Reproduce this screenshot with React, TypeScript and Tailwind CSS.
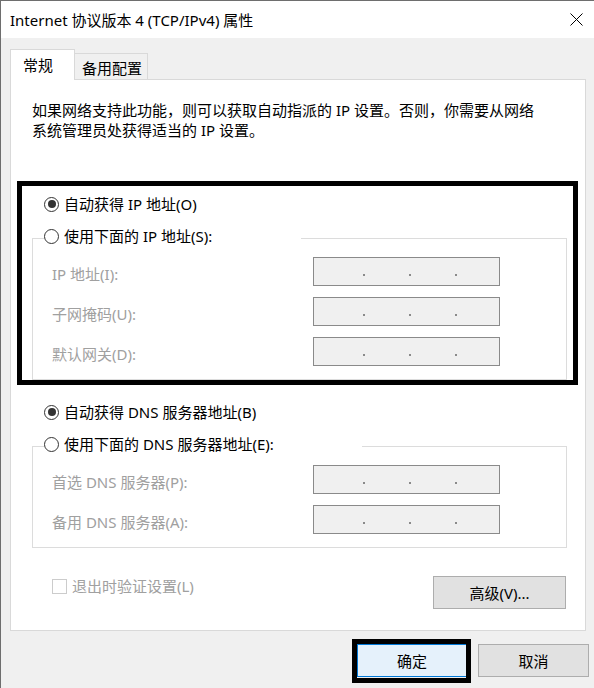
import React from 'react'

const Radio = ({ checked }: { checked?: boolean }) => (
  <span className="w-[15px] h-[15px] rounded-full border border-[#333333] bg-white flex items-center justify-center shrink-0">
    {checked && <span className="w-[8px] h-[8px] rounded-full bg-[#333333]" />}
  </span>
)

const IpBox = () => (
  <div className="w-[187px] h-[29px] border border-[#8a8a8a] bg-[#f0f0f0] flex items-start pt-[16px] pl-[49px] gap-[44px]">
    <span className="w-[2px] h-[2px] bg-[#8a8a8a]" />
    <span className="w-[2px] h-[2px] bg-[#8a8a8a]" />
    <span className="w-[2px] h-[2px] bg-[#8a8a8a]" />
  </div>
)

const FieldRow = ({ label }: { label: string }) => (
  <div className="flex items-center">
    <span className="w-[261px] pt-[4px] text-[#a0a0a0] leading-[20px]">{label}</span>
    <IpBox />
  </div>
)

const GroupBox = ({
  legend,
  legendWidth,
  fields,
}: {
  legend: string
  legendWidth: string
  fields: string[]
}) => (
  <fieldset className="mt-[12px] border border-[#dcdcdc] pl-[19px] pt-[6px] pb-[13px] flex flex-col gap-[11px]">
    {/* legend starts at the fieldset padding, so pull it back to x=44 */}
    <legend className={`-ml-[8px] pb-[5px] ${legendWidth}`}>
      <span className="flex items-center gap-[5px] h-[20px] leading-[20px]">
        <Radio />
        {legend}
      </span>
    </legend>
    {fields.map((f) => (
      <FieldRow key={f} label={f} />
    ))}
  </fieldset>
)

const Button = ({
  children,
  primary,
  className = '',
}: {
  children: React.ReactNode
  primary?: boolean
  className?: string
}) => (
  <button
    className={`h-[33px] flex items-center justify-center leading-[20px] border ${
      primary ? 'border-[#0078d7] bg-[#e5f1fb]' : 'border-[#adadad] bg-[#e1e1e1]'
    } ${className}`}
  >
    {children}
  </button>
)

export default function App() {
  return (
    <div className="relative w-[594px] h-[688px] overflow-hidden bg-[#f0f0f0] border-l border-t border-[#6e6e6e] text-[15px] text-black font-['Noto_Sans','Noto_Sans_CJK_SC',sans-serif]">
      {/* TITLE BAR */}
      <div className="h-[37px] bg-white flex items-center justify-between pl-[9px] pr-[11px]">
        <span className="leading-[20px]">Internet 协议版本 4 (TCP/IPv4) 属性</span>
        <svg width="13" height="13" viewBox="0 0 13 13" className="text-black">
          <path d="M0.5 0.5 L12.5 12.5 M12.5 0.5 L0.5 12.5" stroke="currentColor" strokeWidth="1" fill="none" />
        </svg>
      </div>

      <div className="pl-[9px] pr-[8px]">
        {/* TABS */}
        <div className="mt-[11px] flex items-end h-[30px]">
          <div className="relative z-10 -mb-px w-[65px] h-[31px] bg-white border border-b-0 border-[#d9d9d9] pl-[12px] pt-[5px] leading-[20px]">
            常规
          </div>
          <div className="w-[73px] h-[26px] bg-[#f0f0f0] border border-l-0 border-b-0 border-[#d9d9d9] pl-[7px] pt-[4px] leading-[20px]">
            备用配置
          </div>
        </div>

        {/* PANEL */}
        <div className="w-[576px] bg-white border border-[#d9d9d9] pl-[21px] pr-[18px] pt-[20px] pb-[21px]">
          <p className="leading-[20px]">
            如果网络支持此功能，则可以获取自动指派的 IP 设置。否则，你需要从网络
            <br />
            系统管理员处获得适当的 IP 设置。
          </p>

          <div className="mt-[54px] ml-[12px] flex items-center gap-[5px] h-[20px] leading-[20px]">
            <Radio checked />
            自动获得 IP 地址(O)
          </div>
          <GroupBox
            legend="使用下面的 IP 地址(S):"
            legendWidth="w-[257px]"
            fields={['IP 地址(I):', '子网掩码(U):', '默认网关(D):']}
          />

          <div className="mt-[22px] ml-[12px] flex items-center gap-[5px] h-[20px] leading-[20px]">
            <Radio checked />
            自动获得 DNS 服务器地址(B)
          </div>
          <GroupBox
            legend="使用下面的 DNS 服务器地址(E):"
            legendWidth="w-[318px]"
            fields={['首选 DNS 服务器(P):', '备用 DNS 服务器(A):']}
          />

          <div className="mt-[28px] pl-[20px] pr-[1px] flex items-start justify-between">
            <div className="h-[20px] flex items-center gap-[5px] text-[#a0a0a0] leading-[20px]">
              <span className="w-[15px] h-[15px] border border-[#cccccc] bg-white" />
              退出时验证设置(L)
            </div>
            <Button className="w-[133px]">高级(V)...</Button>
          </div>
        </div>

        {/* FOOTER */}
        <div className="mt-[13px] flex justify-end gap-[11px] mr-[-3px]">
          <Button primary className="w-[110px]">确定</Button>
          <Button className="w-[111px]">取消</Button>
        </div>
      </div>

      {/* annotation frames */}
      <div className="absolute left-[16px] top-[180px] w-[561px] h-[204px] border-[5px] border-black pointer-events-none" />
      <div className="absolute left-[351px] top-[638px] w-[119px] h-[44px] border-[5px] border-black pointer-events-none" />
    </div>
  )
}
